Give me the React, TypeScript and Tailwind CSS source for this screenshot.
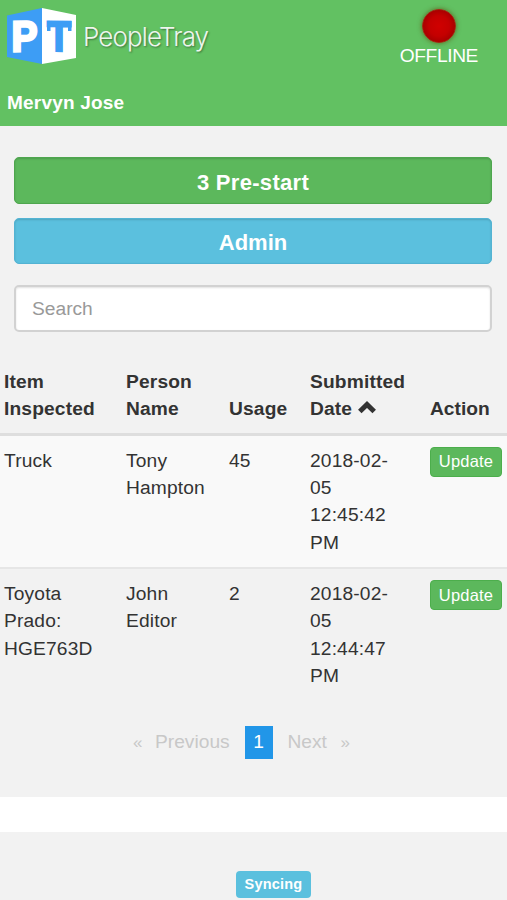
const inspections = [
  { item: 'Truck', person: 'Tony Hampton', usage: 45, submitted: '2018-02-05 12:45:42 PM', rowClass: 'h-[134px] bg-[#f9f9f9]' },
  { item: 'Toyota Prado: HGE763D', person: 'John Editor', usage: 2, submitted: '2018-02-05 12:44:47 PM', rowClass: 'h-[133px] bg-[#f2f2f2]' },
];

function Logo() {
  return (
    <div className="flex items-center">
      <svg width="72" height="58" viewBox="0 0 72 58" className="shrink-0" fontFamily="Liberation Sans, sans-serif" fontWeight="700">
        <path d="M1 8.500 36 1v56L1 50z" fill="#3d9df5" />
        <path d="M36 1l34 7v43l-34 6z" fill="#fff" />
        <text transform="matrix(1 -.02 0 1 5.500 44.500)" fontSize="43" textLength="26" lengthAdjust="spacingAndGlyphs" fill="#fff" stroke="#fff" strokeWidth="2.600">
          P
        </text>
        <text transform="matrix(1 .01 0 1 41 44)" fontSize="43" textLength="24" lengthAdjust="spacingAndGlyphs" fill="#3d9df5" stroke="#3d9df5" strokeWidth="2">
          T
        </text>
        <path d="M41 14h3.500v10H41zM62 14h3.500v10H62z" fill="#3d9df5" />
      </svg>
      <span className="mt-px ml-[5px] font-['Inter'] text-[26px] leading-none font-light tracking-[-0.900px] text-white/90 [text-shadow:1px_1px_2px_rgba(0,0,0,0.4)]">
        PeopleTray
      </span>
    </div>
  );
}

function ChevronUp() {
  return (
    <svg width="18" height="13" viewBox="0 0 18 13" className="inline align-[1px]">
      <path d="M1.800 10.500 9 3.500l7.200 7" fill="none" stroke="#333" strokeWidth="5" />
    </svg>
  );
}

function Header() {
  return (
    <header className="h-[126px] bg-[#62c162] text-white">
      <div className="flex h-[86px] justify-between pt-[7px] pr-[29px] pl-[6px]">
        <div className="h-[58px]">
          <Logo />
        </div>
        <div className="flex flex-col items-center pt-[2px]">
          <div className="size-[34px] rounded-full border border-[#a02a10] bg-[radial-gradient(circle,#d00000_0%,#c40000_45%,#8a0000_100%)] shadow-[0_0_5px_rgba(90,60,0,0.7)]" />
          <span className="mt-[3px] text-[19.200px] leading-[20px] tracking-[-0.400px]">OFFLINE</span>
        </div>
      </div>
      <div className="pl-[7px] text-[19px] leading-[34px] font-bold tracking-[0.200px]">Mervyn Jose</div>
    </header>
  );
}

function InspectionTable() {
  return (
    <table className="mt-[23px] w-full table-fixed border-collapse text-left text-[19.200px] leading-[27.400px] tracking-[0.150px] text-[#333]">
      <colgroup>
        <col className="w-[122px]" />
        <col className="w-[103px]" />
        <col className="w-[81px]" />
        <col className="w-[120px]" />
        <col className="w-[81px]" />
      </colgroup>
      <thead>
        <tr className="h-[79px] border-b-[3px] border-[#dedede] align-bottom">
          <th className="px-1 pb-[10px]">Item Inspected</th>
          <th className="px-1 pb-[10px]">Person Name</th>
          <th className="px-1 pb-[10px]">Usage</th>
          <th className="px-1 pb-[10px]">
            Submitted Date <ChevronUp />
          </th>
          <th className="px-1 pb-[10px] tracking-normal">Action</th>
        </tr>
      </thead>
      <tbody>
        {inspections.map((row) => (
          <tr key={row.submitted} className={`border-b-2 border-[#e6e6e6] align-top last:border-b-0 ${row.rowClass}`}>
            <td className="px-1 pt-[11px]">{row.item}</td>
            <td className="px-1 pt-[11px]">{row.person}</td>
            <td className="px-1 pt-[11px]">{row.usage}</td>
            <td className="pt-[11px] pr-[30px] pl-1">{row.submitted}</td>
            <td className="px-1 pt-[11px]">
              <button className="block h-[30px] w-[72px] rounded-[4px] border border-[#4cae4c] bg-[#5cb85c] text-[16.500px] leading-none tracking-[0.200px] text-white">
                Update
              </button>
            </td>
          </tr>
        ))}
      </tbody>
    </table>
  );
}

function Pagination() {
  return (
    <nav className="mt-[25px] flex h-[33px] items-center pl-[133px] text-[19.200px] text-[#c8c8c8]">
      <span className="w-[22px] text-[17px]">«</span>
      <span className="w-[89.500px]">Previous</span>
      <span className="flex h-[33px] w-[28px] items-center justify-center bg-[#2196e8] text-white">1</span>
      <span className="ml-[15px] w-[53px]">Next</span>
      <span className="text-[17px]">»</span>
    </nav>
  );
}

export default function App() {
  return (
    <div className="h-[900px] w-full overflow-hidden bg-white font-['Liberation_Sans',Arial,sans-serif]">
      <Header />
      <main className="h-[671px] bg-[#f2f2f2] pt-[31px]">
        <div className="flex flex-col gap-[14px] pr-[15px] pl-[14px]">
          <button className="h-[47px] rounded-[5px] border border-[#4ea64e] bg-[#5cb85c] pt-[4px] text-[22px] leading-none font-bold tracking-[0.300px] text-white shadow-[inset_0_1px_2px_rgba(0,0,0,0.15)]">
            3 Pre-start
          </button>
          <button className="h-[46px] rounded-[5px] border border-[#53b3d3] bg-[#5bc0de] pt-[4px] text-[22px] leading-none font-bold text-white shadow-[inset_0_1px_2px_rgba(0,0,0,0.15)]">
            Admin
          </button>
          <input
            type="text"
            placeholder="Search"
            className="mt-[7px] h-[47px] rounded-[5px] border-2 border-[#d2d2d2] bg-white px-4 pt-px text-[19.200px] shadow-[inset_0_1px_2px_rgba(0,0,0,0.12)] placeholder:text-[#999]"
          />
        </div>
        <InspectionTable />
        <Pagination />
      </main>
      <footer className="mt-[35px] flex h-[68px] justify-center bg-[#f2f2f2] pt-[39px] pl-[40px]">
        <span className="flex h-[27px] w-[75px] items-center justify-center rounded-[4px] bg-[#5bc0de] text-[14.500px] font-bold tracking-[0.200px] text-white">
          Syncing
        </span>
      </footer>
    </div>
  );
}
